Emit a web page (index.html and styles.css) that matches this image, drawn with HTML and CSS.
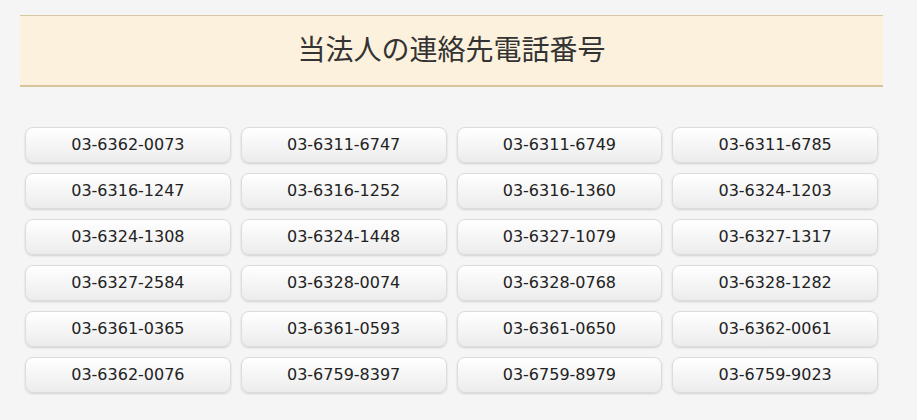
FILE: index.html
```html
<!DOCTYPE html>
<html lang="ja">
<head>
<meta charset="utf-8">
<link rel="stylesheet" href="styles.css">
</head>
<body>
<div class="page">
  <h1 class="title">当法人の連絡先電話番号</h1>
  <ul class="phones">
    <li><a class="btn">03-6362-0073</a></li>
    <li><a class="btn">03-6311-6747</a></li>
    <li><a class="btn">03-6311-6749</a></li>
    <li><a class="btn">03-6311-6785</a></li>
    <li><a class="btn">03-6316-1247</a></li>
    <li><a class="btn">03-6316-1252</a></li>
    <li><a class="btn">03-6316-1360</a></li>
    <li><a class="btn">03-6324-1203</a></li>
    <li><a class="btn">03-6324-1308</a></li>
    <li><a class="btn">03-6324-1448</a></li>
    <li><a class="btn">03-6327-1079</a></li>
    <li><a class="btn">03-6327-1317</a></li>
    <li><a class="btn">03-6327-2584</a></li>
    <li><a class="btn">03-6328-0074</a></li>
    <li><a class="btn">03-6328-0768</a></li>
    <li><a class="btn">03-6328-1282</a></li>
    <li><a class="btn">03-6361-0365</a></li>
    <li><a class="btn">03-6361-0593</a></li>
    <li><a class="btn">03-6361-0650</a></li>
    <li><a class="btn">03-6362-0061</a></li>
    <li><a class="btn">03-6362-0076</a></li>
    <li><a class="btn">03-6759-8397</a></li>
    <li><a class="btn">03-6759-8979</a></li>
    <li><a class="btn">03-6759-9023</a></li>
  </ul>
</div>
</body>
</html>
```
FILE: styles.css
```css
html, body {
  margin: 0;
  padding: 0;
  background: #f5f5f5;
}
body {
  font-family: "DejaVu Sans", "Noto Sans CJK JP", sans-serif;
  color: #333;
}
.page {
  width: 863px;
  margin: 15px 0 0 20px;
}
.title {
  margin: 0;
  height: 69px;
  background: #fcf1dc;
  border-top: 1px solid #d8c7a0;
  border-bottom: 2px solid #d8c49a;
  font-family: "Noto Sans CJK JP", sans-serif;
  font-weight: normal;
  font-size: 28px;
  line-height: 64px;
  text-align: center;
  color: #333;
}
.phones {
  list-style: none;
  margin: 35px 0 0 0;
  padding: 0;
  display: grid;
  grid-template-columns: repeat(4, 1fr);
}
.phones li {
  padding: 5px;
}
.btn {
  display: block;
  height: 34px;
  line-height: 34px;
  border: 1px solid #dcdcdc;
  border-radius: 8px;
  background: linear-gradient(#ffffff, #ececec);
  box-shadow: 0 1px 2px rgba(0, 0, 0, 0.15);
  text-align: center;
  font-size: 16px;
  color: #222;
}
```
